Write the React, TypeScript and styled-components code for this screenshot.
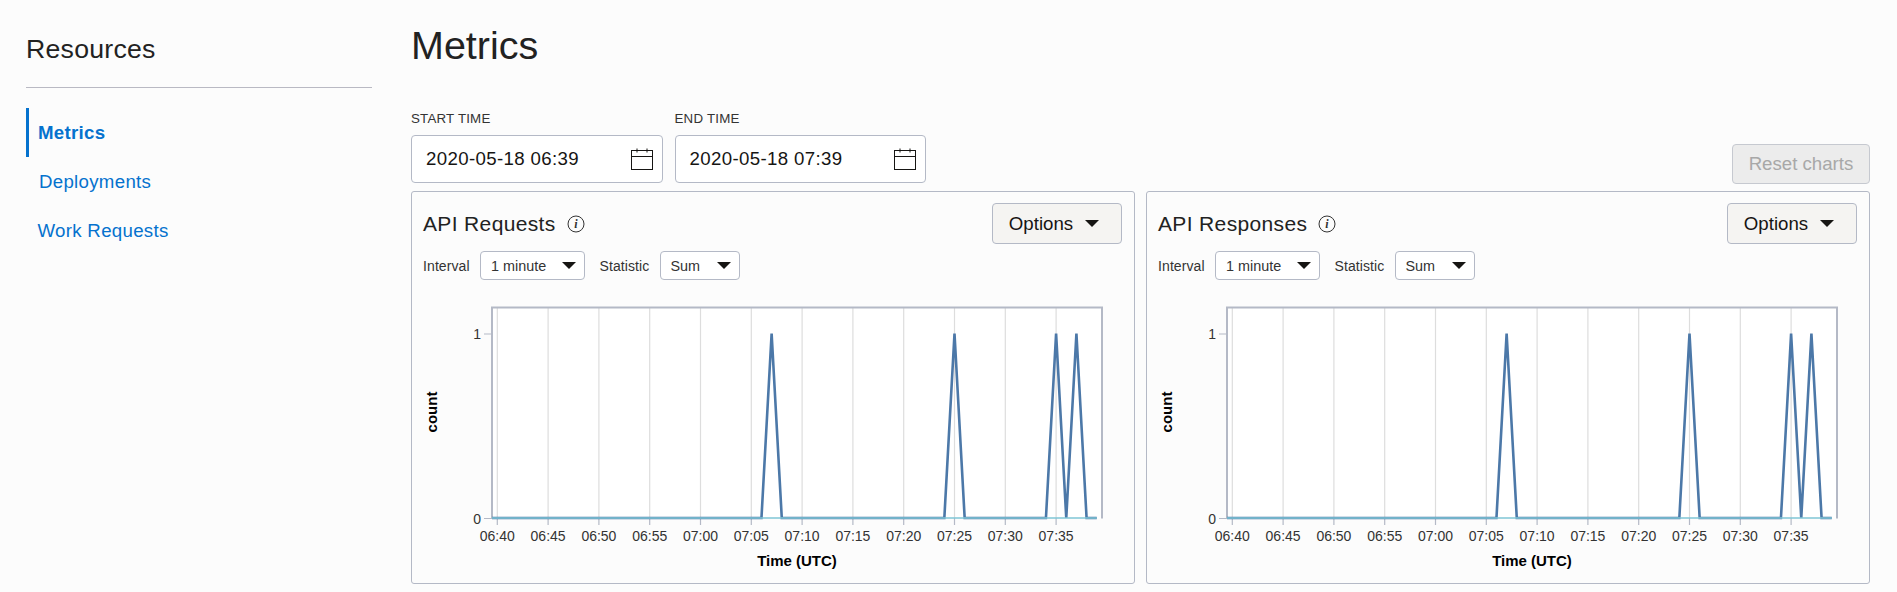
import React from "react";
import styled, { createGlobalStyle } from "styled-components";

const Global = createGlobalStyle`
  html, body { margin: 0; padding: 0; background: #fcfcfc; }
  body { font-family: "Liberation Sans", Arial, sans-serif; color: #161513; }
`;

const Page = styled.div`
  display: flex;
  width: 1897px;
  height: 592px;
  overflow: hidden;
  box-sizing: border-box;
  padding: 0 27px 0 26px;
`;

const Sidebar = styled.aside`
  width: 346px;
  flex: none;
  margin-right: 39px;
`;

const SideTitle = styled.h2`
  margin: 0;
  padding-top: 33px;
  height: 54px;
  border-bottom: 1px solid #b9b9c3;
  font-size: 26.67px;
  line-height: 32px;
  font-weight: 400;
  letter-spacing: 0.25px;
  color: #222;
`;

const NavList = styled.nav`
  display: flex;
  flex-direction: column;
  margin-top: 20px;
`;

const NavItem = styled.a<{ $active?: boolean; $inset: number }>`
  display: flex;
  align-items: center;
  height: 49px;
  box-sizing: border-box;
  padding-left: ${(p) => p.$inset}px;
  border-left: ${(p) => (p.$active ? "3px solid #0572ce" : "none")};
  color: #0572ce;
  font-size: 18.67px;
  letter-spacing: 0.3px;
  font-weight: ${(p) => (p.$active ? 700 : 400)};
`;

const Main = styled.main`
  flex: 1;
  min-width: 0;
`;

const Heading = styled.h1`
  margin: 0;
  padding-top: 22px;
  font-size: 39.5px;
  line-height: 46px;
  font-weight: 400;
  color: #222;
`;

const Toolbar = styled.div`
  display: flex;
  align-items: flex-end;
  gap: 12px;
  margin-top: 42px;
  margin-bottom: 8px;
`;

const Field = styled.label`
  display: flex;
  flex-direction: column;
  gap: 8px;
`;

const FieldLabel = styled.span`
  font-size: 13.33px;
  line-height: 16px;
  letter-spacing: 0.2px;
  color: #333;
  padding-top: 1px;
`;

const DateBox = styled.div`
  display: flex;
  align-items: center;
  justify-content: space-between;
  width: 251.5px;
  height: 48px;
  box-sizing: border-box;
  padding: 0 8px 0 14px;
  border: 1px solid #b4b9c6;
  border-radius: 4px;
  background: #fff;
  font-size: 18.67px;
  letter-spacing: 0.36px;
`;

const ResetButton = styled.button`
  margin-left: auto;
  width: 138px;
  height: 40px;
  margin-bottom: -1px;
  padding: 0;
  box-sizing: border-box;
  border: 1px solid #c6c9d0;
  border-radius: 4px;
  background: #ececec;
  color: #a8a8a8;
  font: 400 18.67px "Liberation Sans", Arial, sans-serif;
`;

const Panels = styled.div`
  display: grid;
  grid-template-columns: 1fr 1fr;
  gap: 11px;
`;

const Panel = styled.section`
  height: 393px;
  box-sizing: border-box;
  border: 1px solid #b4b9c6;
  border-radius: 3px;
  padding-top: 11px;
  min-width: 0;
`;

const PanelHead = styled.div`
  display: flex;
  align-items: center;
  justify-content: space-between;
  padding: 0 12px 0 11px;
`;

const PanelTitle = styled.div`
  display: flex;
  align-items: center;
  gap: 11px;
  font-size: 21px;
  line-height: 26px;
  letter-spacing: 0.35px;
  color: #222;
`;

const OptionsButton = styled.button`
  display: flex;
  align-items: center;
  justify-content: center;
  gap: 12px;
  width: 130px;
  height: 41px;
  padding: 0 6px 0 0;
  box-sizing: border-box;
  border: 1px solid #b4b9c6;
  border-radius: 4px;
  background: #f5f4f2;
  color: #161513;
  font: 400 18.67px "Liberation Sans", Arial, sans-serif;
`;

const Caret = styled.span<{ $w: number; $h: number }>`
  flex: none;
  width: 0;
  height: 0;
  border-left: ${(p) => p.$w / 2}px solid transparent;
  border-right: ${(p) => p.$w / 2}px solid transparent;
  border-top: ${(p) => p.$h}px solid #161513;
`;

const Filters = styled.div`
  display: flex;
  align-items: center;
  padding-left: 11px;
  margin-top: 7px;
`;

const FilterLabel = styled.span<{ $w: number }>`
  width: ${(p) => p.$w}px;
  flex: none;
  font-size: 14px;
  line-height: 18px;
  letter-spacing: 0.1px;
  color: #333;
`;

const Select = styled.div<{ $w: number }>`
  display: flex;
  align-items: center;
  justify-content: space-between;
  width: ${(p) => p.$w}px;
  height: 29px;
  box-sizing: border-box;
  padding: 0 8px 0 10px;
  margin-right: 15px;
  border: 1px solid #b4b9c6;
  border-radius: 4px;
  background: #fff;
  font-size: 14.4px;
  color: #333;
`;

const ChartSvg = styled.svg`
  display: block;
  width: 722px;
  height: 270px;
  margin-top: 24.5px;
`;

const AxisText = styled.text`
  font-family: "Liberation Sans", Arial, sans-serif;
  font-size: 14px;
  fill: #333;
`;

const AxisTitle = styled.text`
  font-family: "Liberation Sans", Arial, sans-serif;
  font-size: 15px;
  font-weight: 700;
  fill: #000;
`;

const CalendarIcon = () => (
  <svg width="24" height="24" viewBox="0 0 24 24" fill="none" stroke="#161513" strokeWidth="1">
    <rect x="1.5" y="3.5" width="21" height="19" />
    <path d="M1.5 9.5h21M7 1.5v4M17 1.5v4" />
  </svg>
);

const InfoIcon = () => (
  <svg width="18" height="18" viewBox="0 0 18 18">
    <circle cx="9" cy="9" r="8" fill="none" stroke="#333" strokeWidth="1" />
    <text x="9" y="13" textAnchor="middle" fontFamily="Liberation Serif, serif" fontStyle="italic" fontWeight="700" fontSize="12" fill="#333">
      i
    </text>
  </svg>
);

const TICKS = ["06:40","06:45","06:50","06:55","07:00","07:05","07:10","07:15","07:20","07:25","07:30","07:35"];
const PLOT_L = 80;
const PLOT_R = 690;
const TOP = 2.5;
const BASE = 213;
const ONE = 28.5;
const X0 = 85.3;
const PER_MIN = 10.16;
const xAt = (min: number) => X0 + min * PER_MIN;

const SPIKES = [27, 45, 55, 57];

const Chart = () => {
  const pts: string[] = [];
  SPIKES.forEach((s, i) => {
    const next = SPIKES[i + 1];
    pts.push(`${xAt(s - 1)},${BASE}`, `${xAt(s)},${ONE}`);
    if (next !== s + 2) pts.push(`${xAt(s + 1)},${BASE}`);
  });
  return (
    <ChartSvg viewBox="0 0 722 270">
      <rect x={PLOT_L} y={TOP} width={PLOT_R - PLOT_L} height={BASE + 0.5 - TOP} fill="#fff" />
      {TICKS.map((t, i) => {
        const x = xAt(i * 5);
        return (
          <g key={t}>
            <line x1={x} x2={x} y1={TOP} y2={BASE} stroke="#ddd" strokeWidth="1.2" />
            <line x1={x} x2={x} y1={BASE} y2={BASE + 7} stroke="#b4b9c6" strokeWidth="1.2" />
            <AxisText x={x} y={236} textAnchor="middle">{t}</AxisText>
          </g>
        );
      })}
      <path
        d={`M${PLOT_L} ${BASE + 0.5}V${TOP}H${PLOT_R}V${BASE + 0.5}`}
        fill="none"
        stroke="#b4b9c6"
        strokeWidth="2"
      />
      <line x1={PLOT_L - 8} x2={PLOT_L} y1={ONE + 0.5} y2={ONE + 0.5} stroke="#b4b9c6" />
      <line x1={PLOT_L - 8} x2={PLOT_L + 1} y1={BASE + 0.5} y2={BASE + 0.5} stroke="#b4b9c6" />
      <AxisText x={69} y={ONE + 5.5} textAnchor="end">1</AxisText>
      <AxisText x={69} y={BASE + 5.5} textAnchor="end">0</AxisText>
      <polyline
        points={`${PLOT_L},${BASE} ${xAt(26)},${BASE} ${pts.join(" ")} ${xAt(59)},${BASE}`}
        fill="none"
        stroke="#4c78a8"
        strokeWidth="2.6"
      />
      <line x1={PLOT_L} x2={xAt(59)} y1={BASE} y2={BASE} stroke="#7fc6d6" strokeWidth="1.5" />
      <AxisTitle x={385} y={261} textAnchor="middle">Time (UTC)</AxisTitle>
      <AxisTitle x={25} y={107} textAnchor="middle" transform="rotate(-90 25 107)">count</AxisTitle>
    </ChartSvg>
  );
};

const MetricPanel = ({ title }: { title: string }) => (
  <Panel>
    <PanelHead>
      <PanelTitle>
        {title}
        <InfoIcon />
      </PanelTitle>
      <OptionsButton>
        Options
        <Caret $w={14} $h={7} />
      </OptionsButton>
    </PanelHead>
    <Filters>
      <FilterLabel $w={57}>Interval</FilterLabel>
      <Select $w={104.5}>
        1 minute
        <Caret $w={14} $h={7} />
      </Select>
      <FilterLabel $w={60}>Statistic</FilterLabel>
      <Select $w={80}>
        Sum
        <Caret $w={14} $h={7} />
      </Select>
    </Filters>
    <Chart />
  </Panel>
);

export default function App() {
  return (
    <>
      <Global />
      <Page>
        <Sidebar>
          <SideTitle>Resources</SideTitle>
          <NavList>
            <NavItem $active $inset={9}>Metrics</NavItem>
            <NavItem $inset={13}>Deployments</NavItem>
            <NavItem $inset={11.5}>Work Requests</NavItem>
          </NavList>
        </Sidebar>
        <Main>
          <Heading>Metrics</Heading>
          <Toolbar>
            <Field>
              <FieldLabel>START TIME</FieldLabel>
              <DateBox>
                2020-05-18 06:39
                <CalendarIcon />
              </DateBox>
            </Field>
            <Field>
              <FieldLabel>END TIME</FieldLabel>
              <DateBox>
                2020-05-18 07:39
                <CalendarIcon />
              </DateBox>
            </Field>
            <ResetButton disabled>Reset charts</ResetButton>
          </Toolbar>
          <Panels>
            <MetricPanel title="API Requests" />
            <MetricPanel title="API Responses" />
          </Panels>
        </Main>
      </Page>
    </>
  );
}
